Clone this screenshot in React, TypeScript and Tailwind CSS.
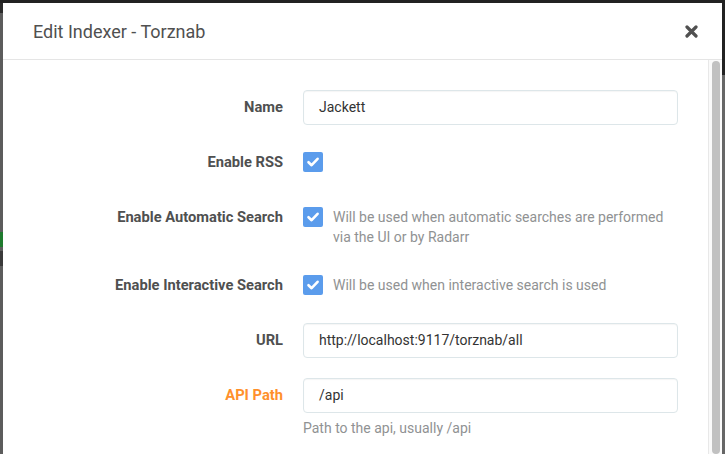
import { ReactNode } from 'react'

function Label({ children, orange = false, tall = false }: { children: ReactNode; orange?: boolean; tall?: boolean }) {
  return (
    <div
      className={`w-[250px] shrink-0 mr-[20px] text-right text-[14.7px] font-bold ${tall ? 'leading-[35px]' : 'leading-[20px]'} ${orange ? 'text-[#ff902b]' : 'text-[#4f5050]'}`}
    >
      {children}
    </div>
  )
}

function Checkbox() {
  return (
    <div className="w-[20px] h-[20px] shrink-0 rounded-[2px] bg-[#5b9cec] flex items-center justify-center">
      <svg width="14" height="14" viewBox="0 0 14 14" fill="none">
        <path d="M2.5 7.2 L5.6 10.2 L11.6 3.8" stroke="white" strokeWidth="2.6" strokeLinecap="round" strokeLinejoin="round" />
      </svg>
    </div>
  )
}

function TextInput({ value }: { value: string }) {
  return (
    <div className="flex-1 h-[35px] border border-[#dde6e9] rounded-[4px] px-[15px] flex items-center text-[14px] text-[#333] shadow-[inset_0_1px_1px_rgba(0,0,0,0.04)]">
      {value}
    </div>
  )
}

export default function App() {
  return (
    <div className="w-[725px] h-[454px] overflow-hidden bg-[#222] flex flex-col" style={{ fontFamily: 'Roboto, "Open Sans", sans-serif' }}>
      <div className="h-[3px] shrink-0 bg-[#222]" />
      <div className="flex flex-1 min-h-0">
        {/* background app peeking on the left */}
        <div className="w-[3px] shrink-0 flex flex-col bg-[#5c5c5c]">
          <div className="h-[10px] bg-[#2b2b2b]" />
          <div className="h-[219px]" />
          <div className="h-[15px] bg-[#1f7a2e]" />
          <div className="h-[4px]" />
          <div className="h-[15px] bg-[#3a3a3a]" />
        </div>

        <div className="flex-1 bg-white flex flex-col">
          <div className="h-[57px] shrink-0 border-b border-[#e5e5e5] flex items-center justify-between pl-[30px] pr-[24px]">
            <h2 className="text-[18px] text-[#505050] font-normal">Edit Indexer - Torznab</h2>
            <svg width="13" height="13" viewBox="0 0 13 13" fill="none" className="mt-[1px]">
              <path d="M2 2 L11 11 M11 2 L2 11" stroke="#505050" strokeWidth="3.2" strokeLinecap="round" />
            </svg>
          </div>

          <div className="flex flex-1 min-h-0">
            <div className="flex-1 pl-[30px] pr-[30px] pt-[30px]">
              <div className="flex">
                <Label tall>Name</Label>
                <TextInput value="Jackett" />
              </div>

              <div className="flex mt-[27px]">
                <Label>Enable RSS</Label>
                <Checkbox />
              </div>

              <div className="flex mt-[35px]">
                <Label>Enable Automatic Search</Label>
                <Checkbox />
                <p className="ml-[10px] w-[340px] text-[14px] leading-[20px] text-[#909293]">
                  Will be used when automatic searches are performed via the UI or by Radarr
                </p>
              </div>

              <div className="flex mt-[28px]">
                <Label>Enable Interactive Search</Label>
                <Checkbox />
                <p className="ml-[10px] text-[14px] leading-[20px] text-[#909293]">
                  Will be used when interactive search is used
                </p>
              </div>

              <div className="flex mt-[28px]">
                <Label tall>URL</Label>
                <TextInput value="http://localhost:9117/torznab/all" />
              </div>

              <div className="flex mt-[20px]">
                <Label tall orange>API Path</Label>
                <TextInput value="/api" />
              </div>
              <div className="ml-[270px] mt-[5px] text-[14px] leading-[20px] text-[#909293]">
                Path to the api, usually /api
              </div>
            </div>

            {/* scrollbar */}
            <div className="w-[14px] shrink-0 border-l border-[#e8e8e8] bg-[#fafafa] pl-[3px] pt-[1px]">
              <div className="w-[8px] h-full rounded-full bg-[#c1c1c1]" />
            </div>
          </div>
        </div>

        <div className="w-[3px] shrink-0 flex flex-col bg-[#666]">
          <div className="h-[72px] bg-[#222]" />
        </div>
      </div>
    </div>
  )
}
